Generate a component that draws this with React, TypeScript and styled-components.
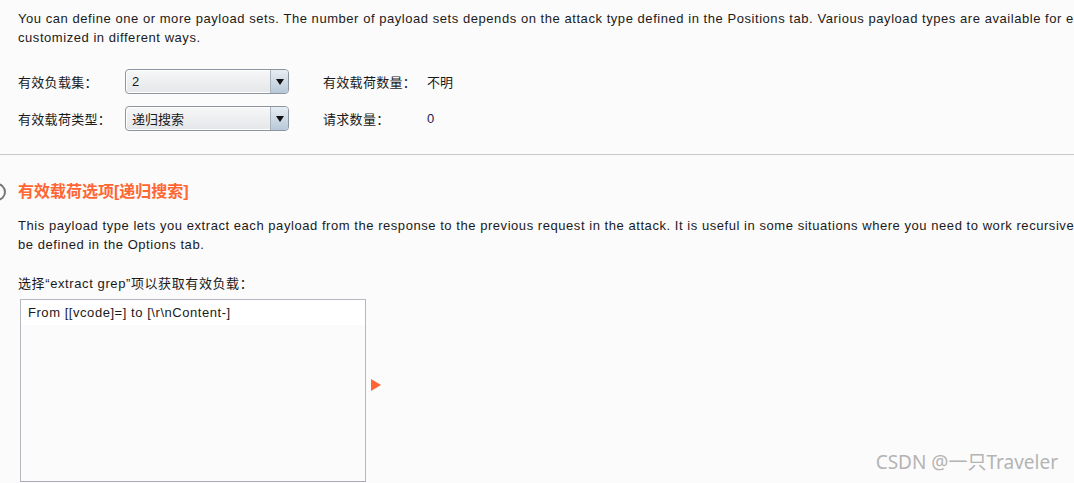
import React from "react"
import styled, { createGlobalStyle } from "styled-components"

const GlobalStyle = createGlobalStyle`
  html, body {
    margin: 0;
    padding: 0;
    background: #fbfbfb;
    overflow: hidden;
  }
  body {
    font-family: "Liberation Sans", "Noto Sans CJK SC", sans-serif;
    font-size: 13px;
    color: #1a1a1a;
  }
`

const Page = styled.div`
  width: 1074px;
  height: 483px;
  overflow: hidden;
  position: relative;
`

const Section = styled.div`
  padding: 9px 0 0 18px;
`

const Para = styled.p`
  margin: 0;
  white-space: nowrap;
  line-height: 19px;
  letter-spacing: 0.55px;
`

const Form = styled.div`
  display: grid;
  grid-template-columns: 107px 164px 34px 104px auto;
  row-gap: 12px;
  margin-top: 22px;
  align-items: center;
`

const Label = styled.span`
  font-size: 13px;
  white-space: nowrap;
  letter-spacing: 0.3px;
`

const Value = styled.span<{ $num?: boolean }>`
  font-size: 13px;
  color: ${p => (p.$num ? "#1a1a50" : "#1a1a1a")};
`

const Select = styled.div`
  height: 25px;
  box-sizing: border-box;
  border: 1px solid #8c959f;
  border-radius: 4px;
  background: linear-gradient(#f7f7f8, #e4e6e9);
  display: flex;
  align-items: stretch;
  overflow: hidden;
  box-shadow: inset 0 0 0 1px #ffffff;
`

const SelectText = styled.span`
  flex: 1;
  padding-left: 6px;
  display: flex;
  align-items: center;
  font-size: 13px;
`

const Arrow = styled.span`
  width: 17px;
  border-left: 1px solid #a9b4bf;
  background: linear-gradient(#e7edf3, #b8c8d8);
  display: flex;
  align-items: center;
  justify-content: center;
  &::after {
    content: "";
    border-left: 4px solid transparent;
    border-right: 4px solid transparent;
    border-top: 6px solid #111;
  }
`

const Divider = styled.hr`
  margin: 23px 0 0 0;
  border: none;
  border-top: 1px solid #c8c8cc;
`

const Options = styled.div`
  padding: 26px 0 0 18px;
  position: relative;
`

const Circle = styled.span`
  position: absolute;
  left: -12px;
  top: 28px;
  width: 14px;
  height: 14px;
  border: 2px solid #777;
  border-radius: 50%;
`

const Heading = styled.h3`
  margin: 0 0 14px 0;
  font-size: 16px;
  font-weight: bold;
  color: #ff6633;
  line-height: 21px;
`

const PickLabel = styled.div`
  margin-top: 20px;
  white-space: nowrap;
  line-height: 19px;
  letter-spacing: 0.6px;
`

const ListRow = styled.div`
  display: flex;
  align-items: flex-start;
  margin-top: 6px;
  margin-left: 2px;
`

const ListBox = styled.div`
  width: 346px;
  height: 183px;
  box-sizing: border-box;
  border: 1px solid #b5b9bf;
  border-bottom-color: #a8acb2;
  background: #fbfbfb;
`

const ListItem = styled.div`
  background: #ffffff;
  height: 25px;
  line-height: 26px;
  padding-left: 7px;
  letter-spacing: 0.55px;
`

const Triangle = styled.span`
  margin: 80px 0 0 5px;
  border-top: 6px solid transparent;
  border-bottom: 6px solid transparent;
  border-left: 10px solid #ff6633;
`

const Watermark = styled.div`
  position: absolute;
  right: 16px;
  bottom: 8px;
  font-family: "Noto Sans", "Noto Sans CJK SC", sans-serif;
  font-size: 19px;
  color: #b4b4b4;
`

export default function App() {
  return (
    <Page>
      <GlobalStyle />
      <Section>
        <Para>
          You can define one or more payload sets. The number of payload sets depends on the attack type defined in the Positions tab. Various payload types are available for each payload set, and each payload type can be
        </Para>
        <Para>customized in different ways.</Para>
        <Form>
          <Label>有效负载集：</Label>
          <Select>
            <SelectText>2</SelectText>
            <Arrow />
          </Select>
          <span />
          <Label>有效载荷数量：</Label>
          <Value>不明</Value>
          <Label>有效载荷类型：</Label>
          <Select>
            <SelectText>递归搜索</SelectText>
            <Arrow />
          </Select>
          <span />
          <Label>请求数量：</Label>
          <Value $num>0</Value>
        </Form>
      </Section>
      <Divider />
      <Options>
        <Circle />
        <Heading>有效载荷选项[递归搜索]</Heading>
        <Para>
          This payload type lets you extract each payload from the response to the previous request in the attack. It is useful in some situations where you need to work recursively to extract useful data. The extract grep item must
        </Para>
        <Para>be defined in the Options tab.</Para>
        <PickLabel>选择“extract grep”项以获取有效负载：</PickLabel>
        <ListRow>
          <ListBox>
            <ListItem>From [[vcode]=] to [\r\nContent-]</ListItem>
          </ListBox>
          <Triangle />
        </ListRow>
      </Options>
      <Watermark>CSDN @一只Traveler</Watermark>
    </Page>
  )
}
